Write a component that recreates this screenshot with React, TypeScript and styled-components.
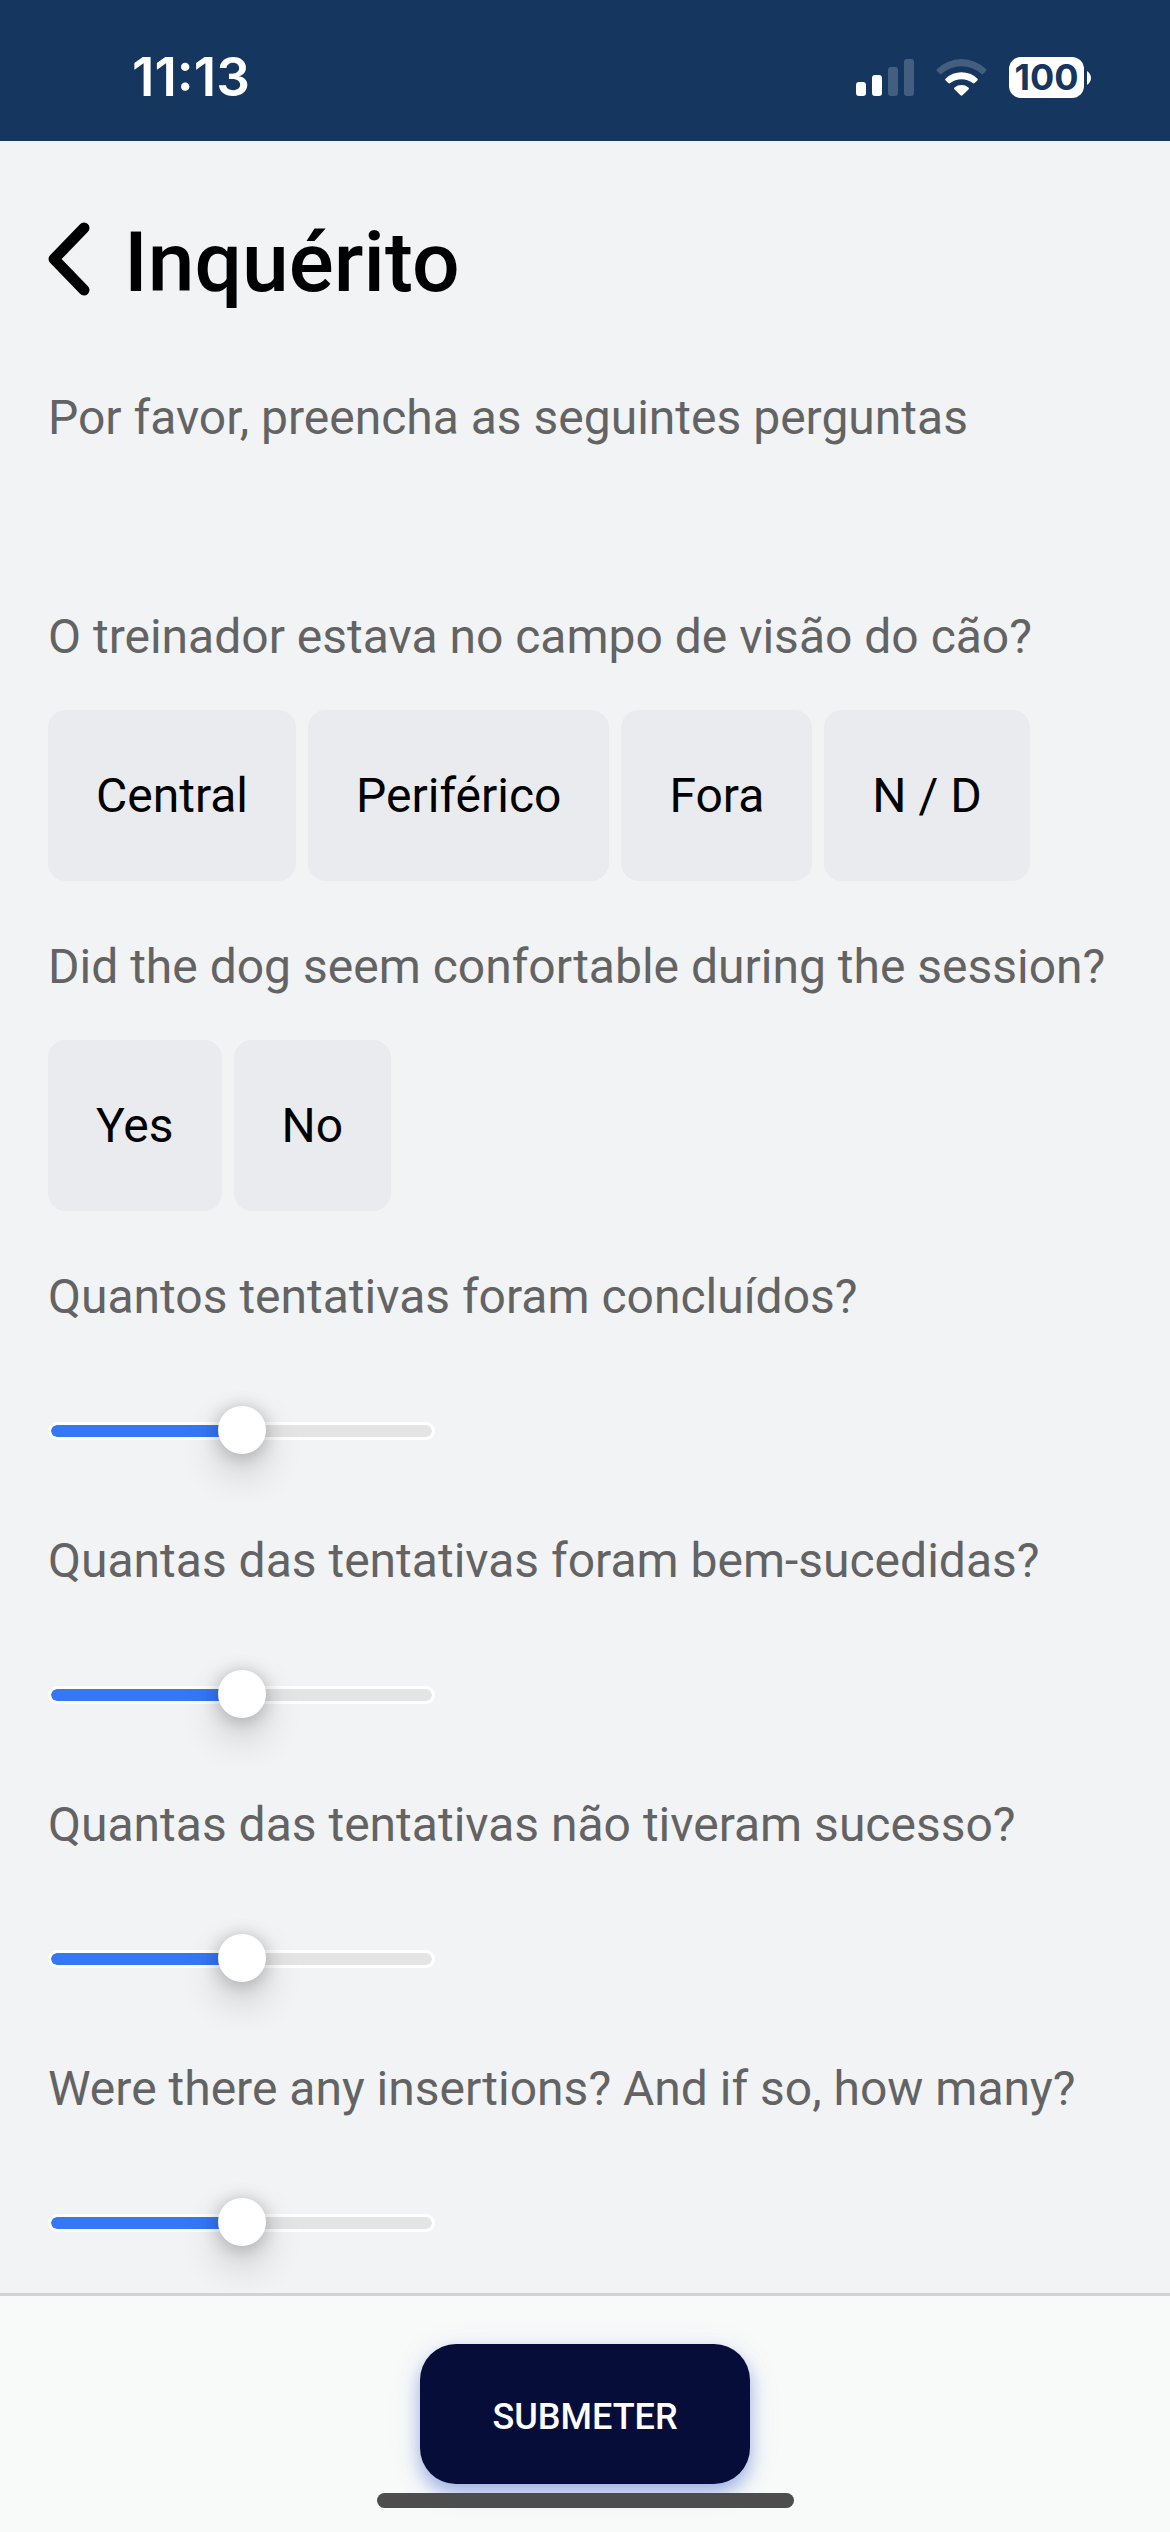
import React, { useState } from "react";
import styled, { createGlobalStyle } from "styled-components";

const GlobalStyle = createGlobalStyle`
  *, *::before, *::after { box-sizing: border-box; }
  body {
    margin: 0;
    background: #f1f3f5;
    font-family: Roboto, "Liberation Sans", sans-serif;
    color: #000;
  }
  button, input { font: inherit; color: inherit; }
`;

const Page = styled.div`
  min-height: 100vh;
  display: flex;
  flex-direction: column;
`;

const StatusBar = styled.div`
  height: 141px;
  padding: 47px 79px 33px 132px;
  display: flex;
  align-items: center;
  justify-content: space-between;
  background: #14365f;
  color: #fff;
  font-family: Inter, Roboto, sans-serif;
  font-weight: 600;
`;

const Clock = styled.time`
  font-size: 53px;
  line-height: 61px;
`;

const StatusIcons = styled.div`
  display: flex;
  align-items: center;
  gap: 22px;
`;

const Battery = styled.div`
  display: flex;
  align-items: center;
  gap: 3px;
`;

const BatteryBody = styled.span`
  width: 75px;
  height: 41px;
  border-radius: 12px;
  background: #fff;
  color: #14365f;
  font-size: 36px;
  font-weight: 700;
  line-height: 41px;
  text-align: center;
`;

const Content = styled.main`
  flex: 1;
  padding: 72px 48px 24px;
`;

const TitleRow = styled.header`
  display: flex;
  align-items: center;
  gap: 34px;
`;

const BackButton = styled.button`
  display: flex;
  padding: 0;
  border: 0;
  background: none;
`;

const Title = styled.h1`
  margin: 0;
  font-size: 84px;
  font-weight: 500;
  line-height: 99px;
`;

const Intro = styled.p`
  margin: 68px 0 144px;
  font-size: 48px;
  line-height: 75px;
  color: #636363;
`;

const Form = styled.form`
  display: flex;
  flex-direction: column;
  gap: 48px;
`;

const Field = styled.div`
  display: flex;
  flex-direction: column;
  gap: 36px;
`;

const Question = styled.label`
  font-size: 48px;
  line-height: 75px;
  color: #636363;
`;

const Options = styled.div`
  display: flex;
  flex-wrap: wrap;
  gap: 12px;
`;

const Option = styled.button<{ $selected: boolean }>`
  padding: 48px;
  border: 0;
  border-radius: 18px;
  background: ${(p) => (p.$selected ? "#cdd9f5" : "#e9ebee")};
  font-size: 48px;
  line-height: 75px;
`;

const SliderBox = styled.div`
  display: flex;
  padding: 36px 0 19px;
`;

const Slider = styled.input`
  appearance: none;
  width: 387px;
  height: 50px;
  margin: 0;
  background: none;

  &::-webkit-slider-runnable-track {
    height: 18px;
    border: 3px solid #fff;
    border-radius: 9px;
    background: linear-gradient(
        to right,
        #3478f6 var(--fill),
        #e4e4e4 var(--fill)
      )
      padding-box;
  }

  &::-webkit-slider-thumb {
    appearance: none;
    width: 48px;
    height: 48px;
    margin-top: -19px;
    border-radius: 50%;
    background: #fff;
    box-shadow: 0 18px 39px rgba(0, 0, 0, 0.19), 0 2px 18px rgba(0, 0, 0, 0.24);
  }
`;

const Footer = styled.footer`
  position: sticky;
  bottom: 0;
  display: flex;
  justify-content: center;
  padding: 48px;
  border-top: 3px solid #d1d3d3;
  background: #f8faf9;
`;

const SubmitButton = styled.button`
  padding: 52px 72px 46px;
  border: 0;
  border-radius: 36px;
  background: #070d39;
  box-shadow: 0 9px 18px rgba(40, 80, 200, 0.4), 0 6px 36px rgba(80, 80, 200, 0.08);
  color: #fff;
  font-size: 36px;
  font-weight: 500;
  line-height: 42px;
  text-transform: uppercase;
`;

const HomeIndicator = styled.div`
  position: absolute;
  bottom: 24px;
  left: 50%;
  width: 417px;
  height: 15px;
  margin-left: -208px;
  border-radius: 8px;
  background: #4d4d4d;
`;

function SignalIcon() {
  return (
    <svg width="58" height="37" viewBox="0 0 58 37" fill="#fff" aria-hidden="true">
      <rect x="0" y="23" width="10" height="14" rx="3" />
      <rect x="16" y="16" width="10" height="21" rx="3" />
      <rect x="32" y="8" width="10" height="29" rx="3" opacity="0.2" />
      <rect x="48" y="0" width="10" height="37" rx="3" opacity="0.2" />
    </svg>
  );
}

function WifiIcon() {
  return (
    <svg width="51" height="37" viewBox="0 0 152 112" fill="#fff" aria-hidden="true">
      <path
        opacity="0.2"
        d="M2 30A107 107 0 0 1 150 30Q153 33 150 36L142 45Q139 48 136 45A90 90 0 0 0 16 45Q13 48 10 45L2 36Q-1 33 2 30Z"
      />
      <path d="M28 59A70 70 0 0 1 124 59Q127 62 124 65L116 73Q113 75 110 73A54 54 0 0 0 42 73Q39 75 36 73L28 65Q25 62 28 59Z" />
      <path d="M55 86A33 33 0 0 1 97 86Q100 89 97 92L79 110Q76 113 73 110L55 92Q52 89 55 86Z" />
    </svg>
  );
}

function BatteryTip() {
  return (
    <svg width="4" height="14" viewBox="0 0 4 14" fill="#fff" aria-hidden="true">
      <path d="M0 0Q4 3 4 7Q4 11 0 14Z" />
    </svg>
  );
}

function BackIcon() {
  return (
    <svg width="42" height="81" viewBox="0 0 42 81" fill="none" aria-hidden="true">
      <path
        d="M36 6L6 37L36 68"
        stroke="#000"
        strokeWidth="11"
        strokeLinecap="round"
        strokeLinejoin="round"
      />
    </svg>
  );
}

interface ChoiceProps {
  id: string;
  question: string;
  options: string[];
}

function ChoiceField({ id, question, options }: ChoiceProps) {
  const [selected, setSelected] = useState<string | null>(null);
  return (
    <Field>
      <Question as="span" id={id}>
        {question}
      </Question>
      <Options role="group" aria-labelledby={id}>
        {options.map((option) => (
          <Option
            key={option}
            type="button"
            $selected={selected === option}
            aria-pressed={selected === option}
            onClick={() => setSelected(option)}
          >
            {option}
          </Option>
        ))}
      </Options>
    </Field>
  );
}

function SliderField({ id, question }: { id: string; question: string }) {
  const [value, setValue] = useState(50);
  return (
    <Field>
      <Question htmlFor={id}>{question}</Question>
      <SliderBox>
        <Slider
          id={id}
          type="range"
          min={0}
          max={100}
          value={value}
          onChange={(e) => setValue(Number(e.target.value))}
          style={{ "--fill": `${value}%` } as React.CSSProperties}
        />
      </SliderBox>
    </Field>
  );
}

export default function App() {
  return (
    <>
      <GlobalStyle />
      <Page>
        <StatusBar>
          <Clock>11:13</Clock>
          <StatusIcons>
            <SignalIcon />
            <WifiIcon />
            <Battery>
              <BatteryBody>100</BatteryBody>
              <BatteryTip />
            </Battery>
          </StatusIcons>
        </StatusBar>
        <Content>
          <TitleRow>
            <BackButton type="button" aria-label="Voltar">
              <BackIcon />
            </BackButton>
            <Title>Inquérito</Title>
          </TitleRow>
          <Intro>Por favor, preencha as seguintes perguntas</Intro>
          <Form id="survey" onSubmit={(e) => e.preventDefault()}>
            <ChoiceField
              id="trainer-view"
              question="O treinador estava no campo de visão do cão?"
              options={["Central", "Periférico", "Fora", "N / D"]}
            />
            <ChoiceField
              id="dog-comfort"
              question="Did the dog seem confortable during the session?"
              options={["Yes", "No"]}
            />
            <SliderField id="completed" question="Quantos tentativas foram concluídos?" />
            <SliderField id="successful" question="Quantas das tentativas foram bem-sucedidas?" />
            <SliderField id="failed" question="Quantas das tentativas não tiveram sucesso?" />
            <SliderField id="insertions" question="Were there any insertions? And if so, how many?" />
          </Form>
        </Content>
        <Footer>
          <SubmitButton type="submit" form="survey">
            Submeter
          </SubmitButton>
          <HomeIndicator />
        </Footer>
      </Page>
    </>
  );
}
